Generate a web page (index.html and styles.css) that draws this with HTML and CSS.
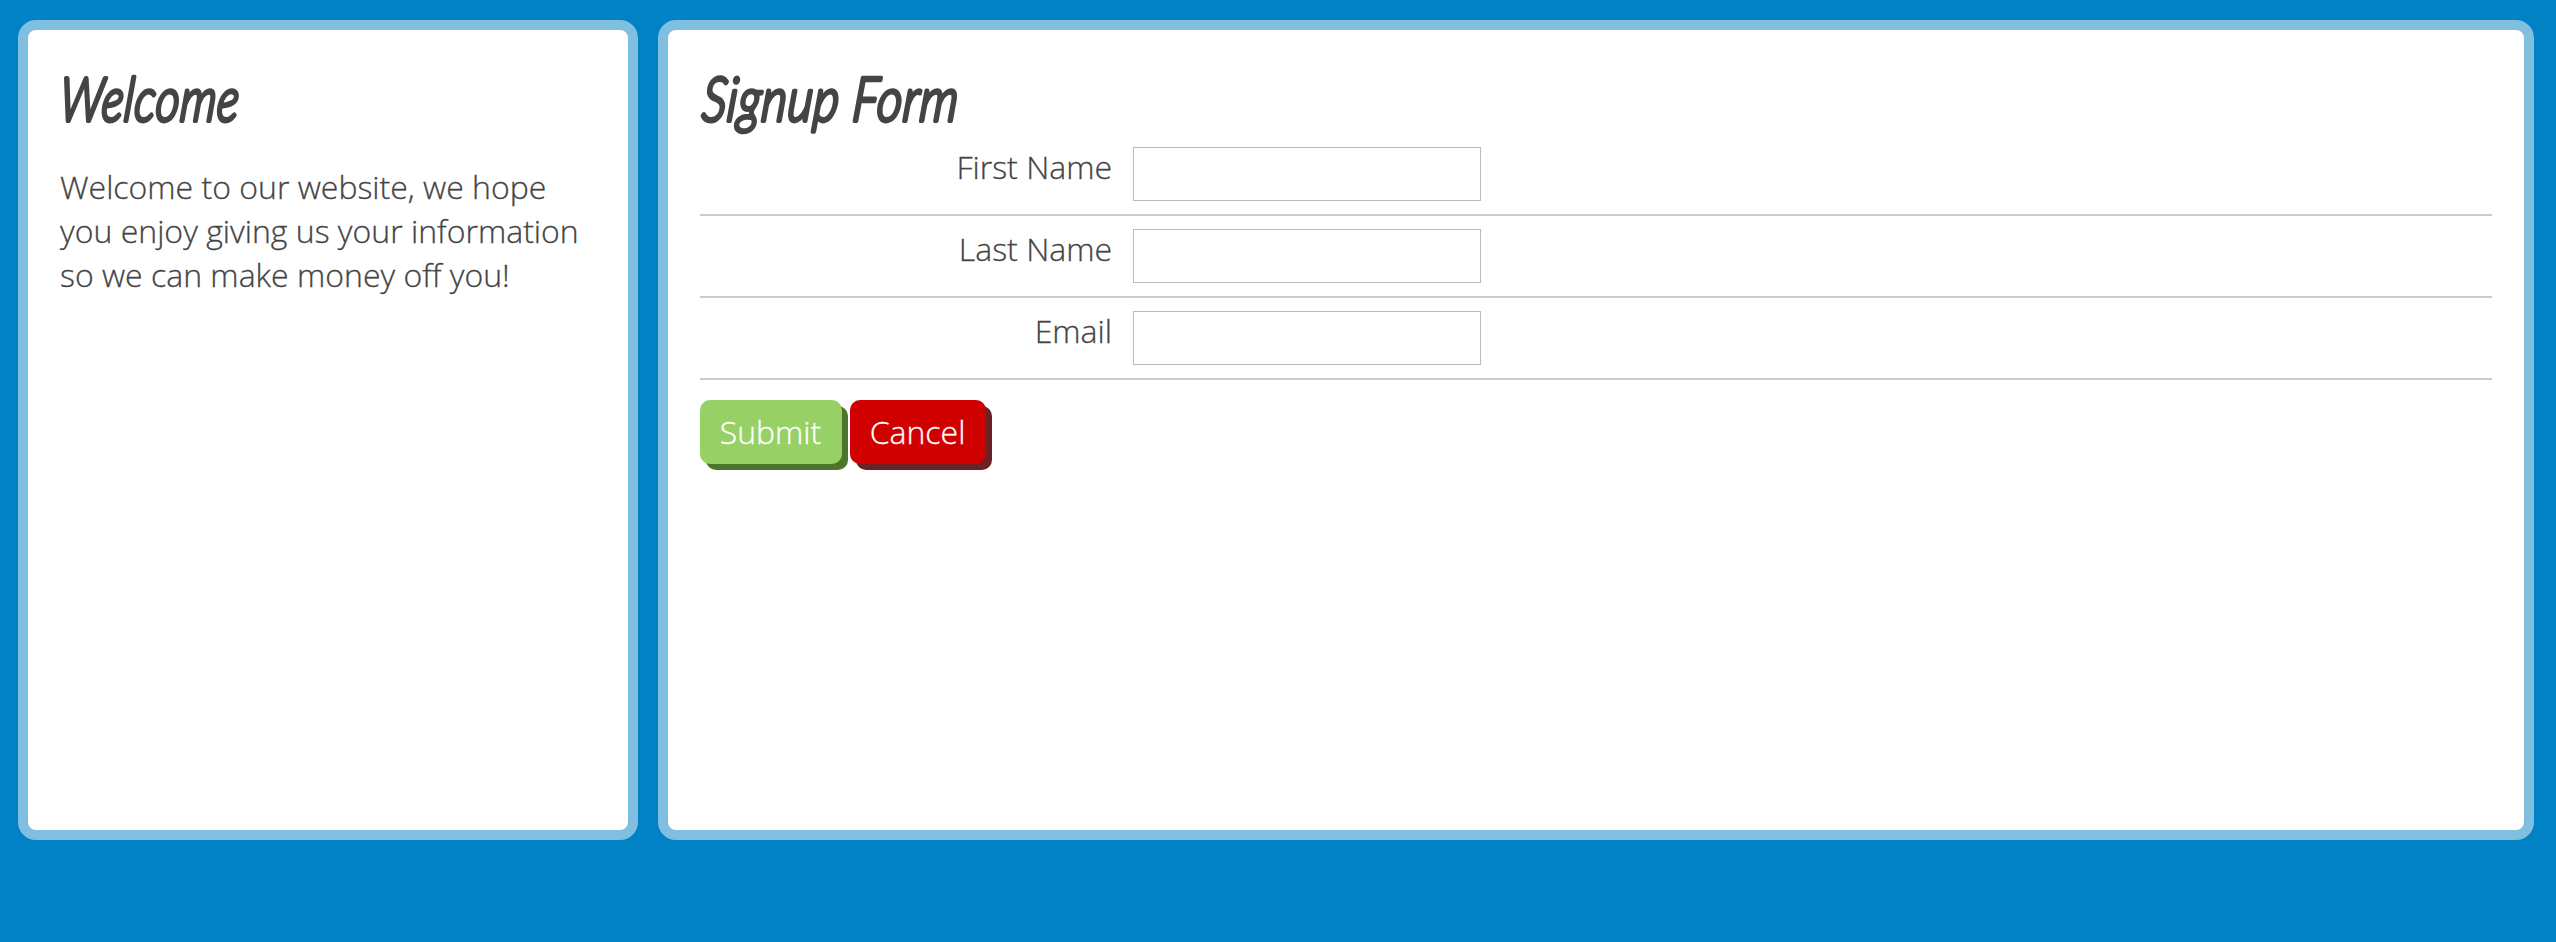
FILE: index.html
```html
<!DOCTYPE html>
<html lang="en">
<head>
<meta charset="utf-8">
<title>Signup Form</title>
<link rel="stylesheet" href="styles.css">
</head>
<body>
<div class="layout">
  <aside class="panel">
    <h1 class="heading"><svg class="lettering" width="260" height="72"><text transform="translate(-1.5 59) skewX(-5) scale(.745 1)" textLength="241" lengthAdjust="spacingAndGlyphs">Welcome</text></svg></h1>
    <p class="intro">Welcome to our website, we hope<br>you enjoy giving us your information<br>so we can make money off you!</p>
  </aside>
  <main class="panel">
    <h1 class="heading"><svg class="lettering" width="300" height="72"><text transform="translate(1 59) skewX(-5) scale(.77 1)" textLength="333" lengthAdjust="spacingAndGlyphs">Signup Form</text></svg></h1>
    <form class="form">
      <div class="row"><label class="label" for="first">First Name</label><input class="field" id="first" type="text"></div>
      <div class="row"><label class="label" for="last">Last Name</label><input class="field" id="last" type="text"></div>
      <div class="row"><label class="label" for="email">Email</label><input class="field" id="email" type="text"></div>
      <div class="actions">
        <button class="button submit" type="button">Submit</button>
        <button class="button cancel" type="button">Cancel</button>
      </div>
    </form>
  </main>
</div>
</body>
</html>
```

FILE: styles.css
```css
* {
  box-sizing: border-box;
}

body {
  margin: 0;
  background: #0082c5;
  color: #444;
  font: 300 32px/44px "Open Sans", sans-serif;
  -webkit-text-stroke: 0.3px currentColor;
}

.layout {
  display: grid;
  grid-template-columns: 620px 1fr;
  gap: 20px;
  height: 860px;
  padding: 20px 22px 20px 18px;
}

.panel {
  padding: 32px;
  border: 10px solid #80bfe0;
  border-radius: 18px;
  background: #fff;
  min-width: 0;
}

.heading {
  height: 72px;
  margin: 0;
}

.lettering {
  display: block;
  overflow: visible;
  font: italic 300 61px Lato, sans-serif;
  letter-spacing: 1px;
}

.lettering text {
  fill: #444;
  stroke: #444;
  stroke-width: 4px;
  stroke-linejoin: round;
  stroke-linecap: round;
}

.intro {
  margin: 31px 0 0;
  white-space: nowrap;
}

.row {
  display: flex;
  align-items: flex-start;
  gap: 21px;
  height: 82px;
  padding-top: 12px;
  border-bottom: 2px solid #ccc;
}

.label {
  width: 412px;
  margin-top: -1px;
  text-align: right;
}

.field {
  width: 348px;
  height: 54px;
  margin: 1px 0 0;
  padding: 4px 8px;
  border: 1px solid #bbb;
  border-radius: 0;
  background: #fff;
  font: inherit;
}

.actions {
  display: flex;
  gap: 8px;
  padding-top: 20px;
}

.button {
  height: 64px;
  padding: 10px 1px 10px 0;
  border: 0;
  border-radius: 10px;
  color: #fff;
  font: inherit;
  -webkit-text-stroke: 0.3px #fff;
}

.submit {
  width: 142px;
  background: #97d165;
  box-shadow: 6px 6px 0 #4d742c;
}

.cancel {
  width: 136px;
  background: #d00000;
  box-shadow: 6px 6px 0 #6b2226;
}
```
